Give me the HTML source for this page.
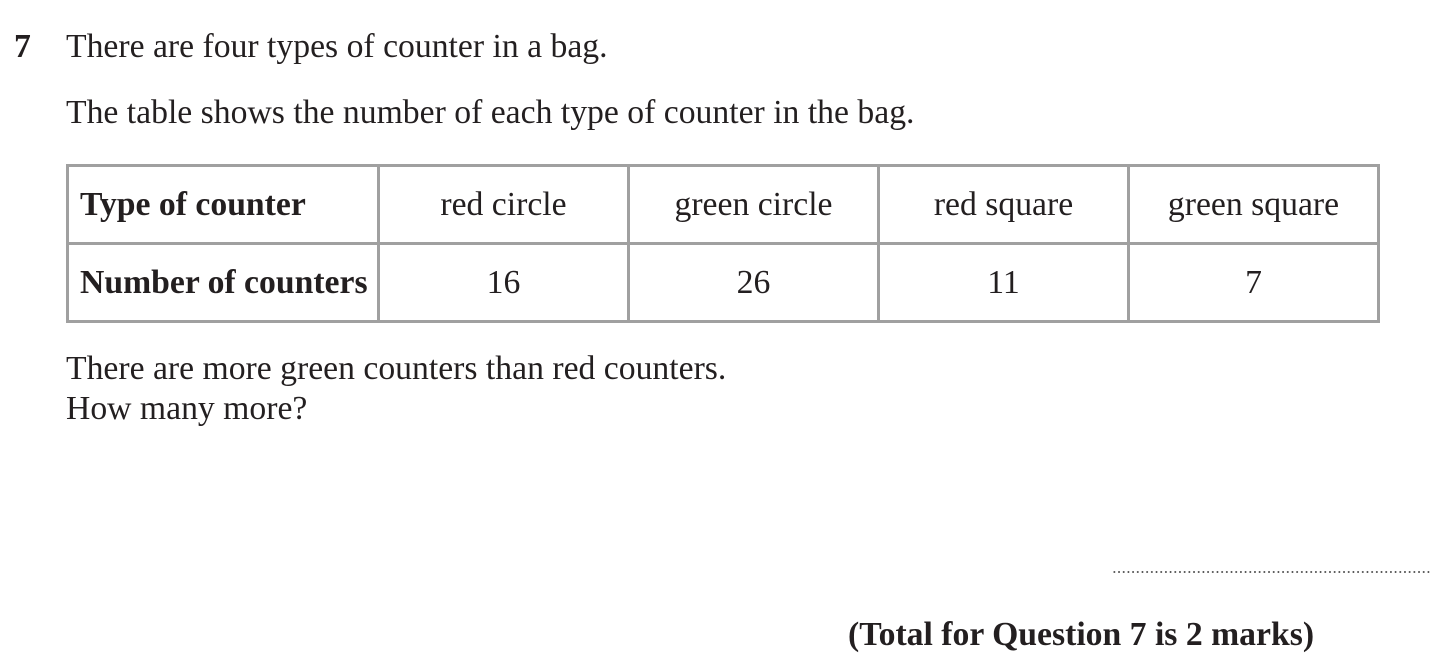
<!DOCTYPE html>
<html><head><meta charset="utf-8"><style>
body{margin:0;width:1445px;height:655px;background:#fff;position:relative;overflow:hidden;font-family:"Liberation Serif",serif;color:#231f20;font-size:33.7px}
.t{position:absolute;white-space:nowrap;line-height:1}
table{position:absolute;left:66px;top:164px;border-collapse:collapse}
td{border:3px solid #a0a0a0;height:75px;padding:0;text-align:center;width:247px;font-size:33.7px}
td.h{width:297px;text-align:left;padding-left:11px;font-weight:bold}
.dots{position:absolute;left:1112px;top:571px;width:320px;height:2px;background-image:radial-gradient(circle,#555 0.9px,transparent 1.1px);background-size:4.7px 2px}
</style></head><body>
<div class="t" style="left:14px;top:30px;font-weight:bold">7</div>
<div class="t" style="left:66px;top:30px">There are four types of counter in a bag.</div>
<div class="t" style="left:66px;top:96px">The table shows the number of each type of counter in the bag.</div>
<table>
<tr><td class="h">Type of counter</td><td>red circle</td><td>green circle</td><td>red square</td><td>green square</td></tr>
<tr><td class="h">Number of counters</td><td>16</td><td>26</td><td>11</td><td>7</td></tr>
</table>
<div class="t" style="left:66px;top:352px">There are more green counters than red counters.</div>
<div class="t" style="left:66px;top:392px">How many more?</div>
<div class="dots"></div>
<div class="t" style="left:848px;top:618px;font-weight:bold">(Total for Question 7 is 2 marks)</div>
</body></html>
